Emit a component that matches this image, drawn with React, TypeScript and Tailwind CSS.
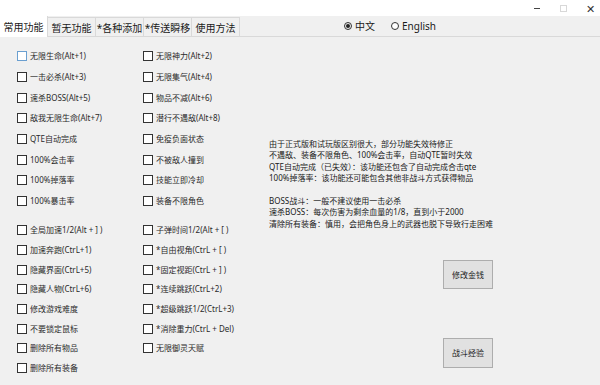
import React from "react";

const groupA: [string, string][] = [
  ["无限生命(Alt+1)", "无限神力(Alt+2)"],
  ["一击必杀(Alt+3)", "无限集气(Alt+4)"],
  ["速杀BOSS(Alt+5)", "物品不减(Alt+6)"],
  ["敌我无限生命(Alt+7)", "潜行不遇敌(Alt+8)"],
  ["QTE自动完成", "免疫负面状态"],
  ["100%会击率", "不被敌人撞到"],
  ["100%掉落率", "技能立即冷却"],
  ["100%暴击率", "装备不限角色"],
];

const groupB: [string, string][] = [
  ["全局加速1/2(Alt + ] )", "子弹时间1/2(Alt + [ )"],
  ["加速奔跑(CtrL+1)", "*自由视角(CtrL + [ )"],
  ["隐藏界面(CtrL+5)", "*固定视距(CtrL + ] )"],
  ["隐藏人物(CtrL+6)", "*连续跳跃(CtrL+2)"],
  ["修改游戏难度", "*超级跳跃1/2(CtrL+3)"],
  ["不要锁定鼠标", "*消除重力(CtrL + Del)"],
  ["删除所有物品", "无限御灵天赋"],
  ["删除所有装备", ""],
];

const tabs = ["常用功能", "暂无功能", "*各种添加", "*传送瞬移", "使用方法"];

const info = [
  "由于正式版和试玩版区别很大，部分功能失效待修正",
  "不遇敌、装备不限角色、100%会击率，自动QTE暂时失效",
  "QTE自动完成（已失效）：该功能还包含了自动完成合击qte",
  "100%掉落率：该功能还可能包含其他非战斗方式获得物品",
  "",
  "BOSS战斗：一般不建议使用一击必杀",
  "速杀BOSS：每次伤害为剩余血量的1/8，直到小于2000",
  "清除所有装备：慎用，会把角色身上的武器也脱下导致行走困难",
];

function Check({ label, focus }: { label: string; focus?: boolean }) {
  if (!label) return <div />;
  return (
    <div className="flex items-center gap-[3px]">
      <span
        className={
          "w-[10px] h-[10px] bg-white border " +
          (focus ? "border-[#6a9fd0]" : "border-[#333333]")
        }
      />
      <span className="text-[8px] leading-[10px] text-[#2a2a2a] whitespace-nowrap">{label}</span>
    </div>
  );
}

export default function App() {
  return (
    <div className="w-[600px] h-[385px] bg-[#f0f0f0] flex flex-col overflow-hidden font-['Noto_Sans','Noto_Sans_CJK_SC',sans-serif]">
      {/* title bar */}
      <div className="h-[16px] bg-white flex justify-end items-center text-[#333]">
        <span className="w-[6px] h-px bg-[#444] mr-[20px]" />
        <span className="w-[7px] h-[7px] border border-[#d8d8d8] mr-[19px]" />
        <span className="text-[11px] leading-none mr-[5px] font-light">✕</span>
      </div>

      {/* tab strip */}
      <div className="h-[21px] flex items-end border-b border-[#d9d9d9]">
        {tabs.map((t, i) =>
          i === 0 ? (
            <div
              key={t}
              className="w-[48px] h-[21px] -mb-px bg-white border-r border-[#d9d9d9] flex items-center justify-center text-[10px] leading-none text-[#1a1a1a]"
            >
              {t}
            </div>
          ) : (
            <div
              key={t}
              className="w-[48px] h-[19px] bg-[#f0f0f0] border-r border-t border-[#d9d9d9] flex items-center justify-center text-[10px] leading-none text-[#1a1a1a] pt-[2px]"
            >
              {t}
            </div>
          )
        )}
        <div className="flex items-center h-[21px] ml-[104px] text-[10px] leading-none text-[#1a1a1a]">
          <span className="w-[8px] h-[8px] rounded-full border border-[#333] flex items-center justify-center">
            <span className="w-[4px] h-[4px] rounded-full bg-[#222]" />
          </span>
          <span className="ml-[3px]">中文</span>
          <span className="ml-[16px] w-[8px] h-[8px] rounded-full border border-[#333] bg-white" />
          <span className="ml-[3px]">English</span>
        </div>
      </div>

      {/* content */}
      <div className="flex flex-1">
        <div className="w-[269px] pl-[17px] pt-[9px]">
          <div className="grid grid-cols-[126px_1fr] auto-rows-[20.7px] items-center">
            {groupA.map(([a, b], i) => (
              <React.Fragment key={a}>
                <Check label={a} focus={i === 0} />
                <Check label={b} />
              </React.Fragment>
            ))}
          </div>
          <div className="grid grid-cols-[126px_1fr] auto-rows-[19.7px] items-center mt-[9px]">
            {groupB.map(([a, b]) => (
              <React.Fragment key={a}>
                <Check label={a} />
                <Check label={b} />
              </React.Fragment>
            ))}
          </div>
        </div>

        <div className="flex flex-col pt-[101px]">
          <div className="text-[8px] leading-[11.4px] text-[#1a1a1a]">
            {info.map((l, i) => (
              <div key={i} className="h-[11.4px] whitespace-nowrap">
                {l}
              </div>
            ))}
          </div>
          <button className="ml-[174px] mt-[31px] w-[50px] h-[29px] bg-[#e1e1e1] border border-[#adadad] text-[8px] text-[#1a1a1a]">
            修改金钱
          </button>
          <button className="ml-[174px] mt-[49px] w-[50px] h-[30px] bg-[#e1e1e1] border border-[#adadad] text-[8px] text-[#1a1a1a]">
            战斗经验
          </button>
        </div>
      </div>
    </div>
  );
}
